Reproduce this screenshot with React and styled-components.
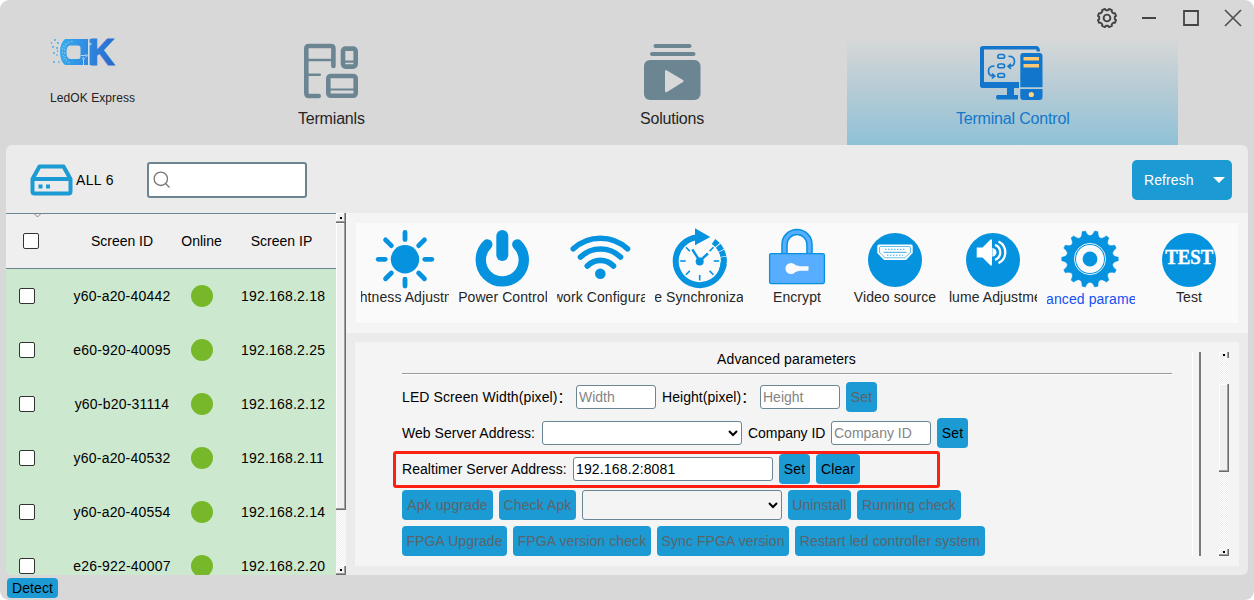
import React from 'react';
import styled, { createGlobalStyle, css } from 'styled-components';

const BLUE = '#1c9ad4';
const ICON = '#0593e0';
const SLATE = '#6b8593';

const Global = createGlobalStyle`
  * { box-sizing: border-box; }
  body { margin: 0; background: #fff; }
  body, input, select, button { font-family: "Liberation Sans", Arial, "Noto Sans CJK SC", sans-serif; font-size: 14px; }
  svg { display: block; flex: none; }
`;

const Window = styled.div`
  width: 1254px;
  height: 600px;
  display: flex;
  flex-direction: column;
  background: #d8d8d8;
  border-radius: 9px;
  overflow: hidden;
  color: #000;
  position: relative;
`;

const Header = styled.header`
  height: 145px;
  display: flex;
  flex: none;
`;

const Brand = styled.div`
  width: 166px;
  padding: 37px 0 0 50px;
  span { display: block; margin-top: 23px; font-size: 12px; line-height: 16px; letter-spacing: 0.08px; color: #222; white-space: nowrap; }
`;

const Nav = styled.nav`
  display: flex;
  gap: 10px;
  padding-top: 37px;
`;

const NavItem = styled.div`
  width: 330.7px;
  height: 108px;
  display: flex;
  flex-direction: column;
  align-items: center;
  justify-content: space-between;
  padding: 6px 0 16px;
  font-size: 16px;
  line-height: 20px;
  letter-spacing: -0.18px;
  color: #262626;
  ${p => p.$active && css`
    color: #1277cc;
    background: linear-gradient(#d8d8d8, #b5cbd5 50%, #8fc1d7);
  `}
`;

const WindowControls = styled.div`
  position: absolute;
  top: 6px;
  right: 9px;
  display: flex;
  gap: 18px;
`;

const Body = styled.main`
  width: 1242px;
  height: 430px;
  margin: 0 6px;
  background: #ebebeb;
  border-radius: 6px;
  overflow: hidden;
  flex: none;
`;

const Toolbar = styled.div`
  height: 68px;
  padding: 15px 16px 0 24px;
  display: flex;
`;

const Count = styled.div`
  width: 117px;
  height: 40px;
  display: flex;
  align-items: center;
  gap: 2px;
  letter-spacing: 0.35px;
`;

const Search = styled.div`
  width: 160px;
  height: 36px;
  margin: 2px 0;
  border: 2px solid #6b8490;
  border-radius: 3px;
  background: #fff;
  padding: 7px 4px;
`;

const Refresh = styled.button`
  width: 100px;
  height: 40px;
  margin-left: auto;
  padding: 0 7px 0 12px;
  border: 0;
  border-radius: 5px;
  background: ${BLUE};
  color: #fff;
  display: flex;
  justify-content: space-between;
  align-items: center;
  letter-spacing: 0.1px;
`;

const Content = styled.div`
  display: flex;
  height: 362px;
`;

const Table = styled.section`
  width: 330px;
  height: 362px;
  overflow: hidden;
  background: #cce8cf;
  flex: none;
`;

const Row = styled.div`
  height: ${p => (p.$head ? 56 : 54)}px;
  display: grid;
  grid-template-columns: 76px 80px 79px 95px;
  align-items: center;
  text-align: center;
  letter-spacing: ${p => (p.$head ? 0 : 0.2)}px;
  ${p => p.$head && css`
    background: #efefef;
    border-top: 1px solid ${SLATE};
    border-bottom: 1px solid ${SLATE};
  `}
  > input { margin-left: ${p => (p.$head ? 17 : 13)}px; }
`;

const IdCell = styled.span`white-space: nowrap; display: flex; justify-content: center;`;
const IpCell = styled.span`padding-right: 14px;`;

const SortMark = styled.svg`
  position: absolute;
  left: 33px;
  top: 213px;
`;

const Check = styled.input.attrs({ type: 'checkbox' })`
  appearance: none;
  width: 16px;
  height: 16px;
  margin: 0;
  background: #fff;
  border: 1px solid #333;
  border-radius: 2px;
`;

const Dot = styled.i`
  width: 22px;
  height: 22px;
  border-radius: 50%;
  background: #76b82a;
  justify-self: center;
`;

const ScrollTrack = styled.div`
  width: 10px;
  height: ${p => p.$h}px;
  flex: none;
  display: flex;
  flex-direction: column;
  background: repeating-conic-gradient(#fff 0 25%, #ececec 0 50%) 0 0 / 2px 2px;
`;

const ScrollPart = styled.div`
  height: ${p => p.$h}px;
  margin-top: ${p => p.$mt || 0}px;
  flex: none;
  background: #f0f0f0;
  border: solid #6b6b6b;
  border-width: 0 1px 1px 0;
  box-shadow: inset -1px -1px #a0a0a0, inset 1px 1px #fff;
  display: flex;
  align-items: center;
  justify-content: center;
  ${p => p.$open && css`
    border-bottom: 0;
    box-shadow: inset -1px 0 #a0a0a0, inset 1px 1px #fff;
  `}
  &::after {
    content: '';
    display: ${p => (p.$arrow ? 'block' : 'none')};
    width: 2px;
    height: 2px;
    background: #000;
  }
`;

const Right = styled.div`
  width: 902px;
  display: flex;
  flex-direction: column;
`;

const TabsWrap = styled.div`
  height: 120px;
  padding: 10px;
  background: #f4f4f4;
`;

const Tabs = styled.div`
  height: 100px;
  background: #fafafa;
  display: flex;
`;

const Tab = styled.div`
  width: 98px;
  padding: 6px 5px 0;
  display: flex;
  flex-direction: column;
  align-items: center;
`;

const TabLabel = styled.div`
  width: 88px;
  height: 20px;
  margin-top: ${p => (p.$active ? 0 : -2)}px;
  display: flex;
  justify-content: center;
  overflow: hidden;
  white-space: nowrap;
  line-height: 20px;
  letter-spacing: 0.08px;
  color: ${p => (p.$active ? '#1450f5' : '#262626')};
  span { flex: none; }
`;

const Panel = styled.section`
  width: 884px;
  height: 224px;
  margin: 9px 0 0 9px;
  padding: 10px 10px 0 47px;
  background: #f4f4f4;
  display: flex;
`;

const Form = styled.div`
  width: 770px;
  display: flex;
  flex-direction: column;
  position: relative;
`;

const Title = styled.div`
  height: 22px;
  margin-bottom: 8px;
  line-height: 14px;
  padding-right: 1px;
  text-align: center;
  letter-spacing: 0.1px;
  border-bottom: 1px solid #9a9a9a;
  box-shadow: 0 1px #fff;
  flex: none;
`;

const FormRow = styled.div`
  height: 30px;
  margin-bottom: 6px;
  display: flex;
  align-items: center;
  gap: 6px;
`;

const Label = styled.label`
  width: ${p => p.$w}px;
  height: 16px;
  line-height: 16px;
  white-space: nowrap;
  letter-spacing: ${p => p.$ls ?? 0.05}px;
`;

const Field = styled.input`
  width: ${p => p.$w}px;
  height: 24px;
  padding: 0 2px;
  border: 1px solid ${SLATE};
  border-radius: 3px;
  background: #fff;
  letter-spacing: 0.15px;
  &::placeholder { color: #858585; letter-spacing: 0; }
`;

const Select = styled.select`
  width: 200px;
  height: ${p => p.$h}px;
  border: 1px solid ${SLATE};
  border-radius: 3px;
  background: ${p => p.$bg};
`;

const Button = styled.button`
  width: ${p => p.$w}px;
  height: ${p => p.$h || 30}px;
  padding: 0;
  border: 0;
  border-radius: 4px;
  background: ${BLUE};
  color: ${p => (p.$off ? '#5d6468' : '#000')};
  white-space: nowrap;
  letter-spacing: 0.1px;
`;

const Highlight = styled.div`
  position: absolute;
  left: -9px;
  top: 99px;
  width: 547px;
  height: 37px;
  border: 3px solid #fd1f12;
  border-radius: 3px;
  pointer-events: none;
`;

const Divider = styled.div`
  width: 9px;
  height: 204px;
  margin: 0 18px 0 20px;
  border-left: 1px solid #fff;
  border-right: 2px solid #7a7a7a;
`;

const Footer = styled.footer`
  padding: 3px 7px;
  display: flex;
`;

const Logo = () => (
  <svg width="66" height="30" viewBox="0 0 66 30" overflow="visible">
    <defs>
      <linearGradient id="logo" x1="0" x2="66" y1="0" y2="8" gradientUnits="userSpaceOnUse">
        <stop offset=".15" stopColor="#35adf2" />
        <stop offset="1" stopColor="#2a68cd" />
      </linearGradient>
    </defs>
    <path fill="url(#logo)" fillRule="evenodd" d="M15 2H38V28H15Q10 24 10 15Q10 6 15 2ZM20 8.500Q16.500 9 16.500 15T20 22H28Q30.500 22 30.500 19.500V11Q30.500 8.500 28 8.500Z" />
    <path fill="url(#logo)" d="M39.500 2h3v26h-3z" />
    <text x="39" y="27.700" fontFamily="Liberation Sans" fontWeight="700" fontSize="36.500" textLength="25.500" lengthAdjust="spacingAndGlyphs" fill="url(#logo)" stroke="url(#logo)" strokeWidth="1.200">K</text>
    <g fill="none" stroke="#d3e4f2" strokeWidth=".8">
      <path d="M31 18.500h4.500M33.500 28V22.500M38.700 7v21" /><circle cx="36.500" cy="18.500" r=".9" /><circle cx="33.500" cy="21.500" r=".9" /><circle cx="40.300" cy="7" r=".9" />
    </g>
    <path stroke="#d8d8d8" strokeWidth="1" strokeLinecap="round" strokeDasharray=".2 3" fill="none" d="M22 4.500Q12 6 12.500 15T20 26M17 7Q14 10 14.500 16T18 24" />
    <g fill="#3aa5e8">
      <circle cx="5" cy="3" r=".9" /><circle cx="1.500" cy="6" r=".8" /><circle cx="8" cy="6" r=".9" /><circle cx="3" cy="10" r=".9" />
      <circle cx="7" cy="11" r=".9" /><circle cx="4" cy="16" r=".9" /><circle cx="7" cy="18" r=".8" />
      <circle cx="4" cy="25" r=".9" /><circle cx="9" cy="25" r=".8" /><circle cx="7.500" cy="14" r=".8" />
    </g>
  </svg>
);

const TerminalsIcon = () => (
  <svg width="54" height="57" viewBox="0 0 54 57" fill="none" stroke={SLATE} strokeWidth="4.600" strokeLinecap="round">
    <path d="M29.400 23V5.500Q29.400 3 27 3H5Q2.300 3 2.300 5.700V50Q2.300 53 5 53H14.700" />
    <path d="M2.300 17h27M2.300 31.700h13.500" strokeWidth="2.400" />
    <rect x="39" y="5.600" width="12.700" height="18" rx="2.500" />
    <path d="M41 18.700h9M25 46.500h26" strokeWidth="2.200" />
    <rect x="24.300" y="33" width="27.400" height="19.800" rx="2.500" />
  </svg>
);

const SolutionsIcon = () => (
  <svg width="57" height="57" viewBox="0 0 57 57">
    <g fill={SLATE}>
      <rect x="9.500" y="1" width="38" height="4" rx="2" />
      <rect x="6" y="9" width="45.500" height="4" rx="2" />
      <rect x="0" y="17" width="56.500" height="40" rx="6" />
    </g>
    <path fill="#d8d8d8" d="M21 28.500Q21 26 23 27.500L39 37Q40.500 38 39 39L23 49Q21 50 21 48Z" />
  </svg>
);

const ControlIcon = () => (
  <svg width="65" height="57" viewBox="1 0 65 57">
    <g fill="#1277cc">
      <path fillRule="evenodd" d="M4 3H57Q61 3 61 8.500H57.500V6.500H5V39H40V45H4Q.5 45 .5 41V7Q.5 3 4 3Z" />
      <path d="M28 45h7v7h4v4.500H18q-2-2.500 0-4.500H28z" />
      <path d="M44 10h16.500q3 0 3 3v31.300H41.300V13q0-3 2.700-3zM41.300 46h22.200v8q0 3-3 3H44.300q-3 0-3-3z" />
    </g>
    <path fill="#fbc971" d="M44.500 14h15.500v3.400H44.500zM44.500 21h15.500v3.400H44.500z" />
    <circle cx="52.300" cy="51.500" r="2.600" fill="#fbd38a" />
    <g fill="none" stroke="#1277cc" strokeWidth="1.600">
      <rect x="18.800" y="11.500" width="6.800" height="3.800" rx="1.900" />
      <rect x="18.800" y="21" width="6.800" height="3.800" rx="1.900" />
      <rect x="18.800" y="30.500" width="6.800" height="3.800" rx="1.900" />
      <path d="M29.500 13.200q6 0 6 5t-5 5M32 20.800l-3 2.500 3 2.500M15.500 23q-6 0-6 5t5 5M12.800 30.500l3 2.500-3 2.500" />
    </g>
  </svg>
);

const gearPath = (cx, cy, teeth, outer, inner, topW, botW) => {
  const pts = [];
  for (let i = 0; i < teeth; i += 1) {
    const mid = ((i + 0.5) / teeth) * Math.PI * 2 - Math.PI / 2;
    [[-botW, inner], [-topW, outer], [topW, outer], [botW, inner]].forEach(([d, r]) => {
      const a = mid + (d * Math.PI) / teeth;
      pts.push(`${(cx + r * Math.cos(a)).toFixed(2)} ${(cy + r * Math.sin(a)).toFixed(2)}`);
    });
  }
  return `M${pts.join('L')}Z`;
};

/* Sprocket outline: flat tooth tips joined by concave curves. */
const sprocketPath = (cx, cy, teeth, outer, dip, tip) => {
  const at = (a, r) => `${(cx + r * Math.cos(a)).toFixed(2)} ${(cy + r * Math.sin(a)).toFixed(2)}`;
  const half = Math.PI / teeth;
  let d = '';
  for (let i = 0; i < teeth; i += 1) {
    const mid = (2 * i + 1) * half - Math.PI / 2;
    d += `${i ? 'L' : 'M'}${at(mid - tip * half, outer)}L${at(mid + tip * half, outer)}`;
    d += `C${at(mid + half * 0.62, dip)} ${at(mid + half * 1.38, dip)} ${at(mid + half * (2 - tip), outer)}`;
  }
  return `${d}Z`;
};

const ServerIcon = () => (
  <svg width="44" height="34" viewBox="0.500 0 44 34" fill="none" stroke={BLUE} strokeWidth="4" strokeLinejoin="round">
    <path d="M3 16L10 3.500H34L41 16V28.500Q41 30.500 39 30.500H5Q3 30.500 3 28.500ZM3 16H41" />
    <path fill={BLUE} stroke="none" d="M9 21.500h4v4H9zM16.500 21.500h4v4h-4z" />
  </svg>
);

const SunIcon = () => (
  <>
    <circle cx="30" cy="30.300" r="14.200" fill={ICON} />
    <g stroke={ICON} strokeWidth="4.800" strokeLinecap="round">
      {[0, 45, 90, 135, 180, 225, 270, 315].map(a => (
        <path key={a} d={a % 90 ? 'M30 11V2.800' : 'M30 10.500V3.500'} transform={`rotate(${a} 30 30.300)`} />
      ))}
    </g>
  </>
);

const PowerIcon = () => (
  <g fill="none" stroke={ICON} strokeLinecap="round">
    <path strokeWidth="10.400" d="M14.300 15.500A21.500 21.500 0 1 0 44.300 15.500" />
    <path strokeWidth="12" d="M29.300 7V26" />
  </g>
);

const WifiIcon = () => (
  <g fill="none" stroke={ICON} strokeWidth="5.600" strokeLinecap="round">
    <path d="M2.300 19.800A40 40 0 0 1 56.500 19.800M9.500 28A29 29 0 0 1 49.500 28M16.300 37A18 18 0 0 1 42.500 37" />
    <circle cx="29.300" cy="44.700" r="5.300" fill={ICON} stroke="none" />
  </g>
);

const ClockIcon = () => (
  <g fill="none" stroke={ICON}>
    <path strokeWidth="6" d="M29 8.200A24 24 0 1 0 53.700 39" />
    <path strokeWidth="6" strokeDasharray="5.500 .8" d="M44.500 12.500A24 24 0 0 1 53.900 39" />
    <path strokeWidth="6" d="M54.500 33A24 24 0 0 1 53 41" />
    <path fill={ICON} stroke="none" d="M26 -.7L41.300 8 26 16.300Z" />
    <path strokeWidth="2.400" d="M23.300 20.300L30.700 32 39 24.500" />
    <circle cx="30.700" cy="32.500" r="4" fill={ICON} stroke="none" />
    <g strokeWidth="1.600">
      {[45, 90, 135, 180, 225, 270, 315].map(a => (
        <path key={a} d="M30.700 12.500v5.500" transform={`rotate(${a} 30.700 32)`} />
      ))}
    </g>
  </g>
);

const LockIcon = () => (
  <>
    <path d="M17.500 25V15.500A12.500 12.500 0 0 1 42.500 15.500V25" fill="none" stroke={ICON} strokeWidth="6.600" />
    <path d="M17.500 25V15.500A12.500 12.500 0 0 1 42.500 15.500V25" fill="none" stroke="#57adff" strokeWidth="3.600" />
    <rect x="2.600" y="24.600" width="54.800" height="30" rx="1.500" fill="#57adff" stroke={ICON} strokeWidth="1.300" />
    <circle cx="24" cy="39.500" r="5.500" fill="#fafafa" />
    <path d="M26 35.500L33 37.300H41.500V41.700H33L26 43.500Z" fill="#fafafa" />
  </>
);

const Disc = () => <circle cx="30" cy="31" r="27" fill={ICON} />;

const VideoIcon = () => (
  <>
    <Disc />
    <path d="M14 15.500H46Q47.700 15.500 47.700 17V24L43.500 28.500 41 31H19L16.500 28.500 12.300 24V17Q12.300 15.500 14 15.500Z" fill="#fff" />
    <path d="M15.500 17.500H44.500Q45.500 17.500 45.500 19V23.500L41 27.500 40 28.800H20L19 27.500 14.500 23.500V19Q14.500 17.500 15.500 17.500Z" fill="none" stroke={ICON} strokeWidth=".6" />
    <path d="M18.500 23.300h23" stroke={ICON} strokeWidth=".8" />
    <path d="M20 20.300h20M22 26.200h16" stroke={ICON} strokeWidth=".8" strokeDasharray="1.500 1.500" />
  </>
);

const VolumeIcon = () => (
  <>
    <Disc />
    <path d="M13.700 18.500H19.500L27.500 10.500H29V36.500H27.500L19.500 28.500H13.700Z" fill="#fff" />
    <path d="M30.500 20.500a3 3 0 0 1 0 5.600zM32 15.800a8 8 0 0 1 0 15M35.500 12.500a12 12 0 0 1 0 21.600" fill="none" stroke="#fff" strokeWidth="2.300" />
  </>
);

const GearIcon = () => (
  <>
    <path d={sprocketPath(29, 30, 14, 28.300, 21.800, 0.26)} fill={ICON} stroke={ICON} strokeWidth=".6" strokeLinejoin="round" />
    <circle cx="29" cy="30" r="15.600" fill="none" stroke="#fafafa" strokeWidth=".9" />
    <circle cx="29" cy="30" r="10.700" fill="none" stroke="#fafafa" strokeWidth="6.600" />
  </>
);

const TestIcon = () => (
  <>
    <Disc />
    <text x="6.200" y="35" fill="#fff" stroke="#fff" strokeWidth=".4" fontFamily="Liberation Serif" fontWeight="700" fontSize="20" textLength="48" lengthAdjust="spacingAndGlyphs">TEST</text>
  </>
);

const tabs = [
  { label: 'Brightness Adjustment', icon: SunIcon },
  { label: 'Power Control', icon: PowerIcon },
  { label: 'Network Configuration', icon: WifiIcon },
  { label: 'Time Synchronization', icon: ClockIcon },
  { label: 'Encrypt', icon: LockIcon },
  { label: 'Video source', icon: VideoIcon },
  { label: 'Volume Adjustment', icon: VolumeIcon },
  { label: 'Advanced parameters', icon: GearIcon, active: true },
  { label: 'Test', icon: TestIcon },
];

const screens = [
  ['y60-a20-40442', '192.168.2.18'],
  ['e60-920-40095', '192.168.2.25'],
  ['y60-b20-31114', '192.168.2.12'],
  ['y60-a20-40532', '192.168.2.11'],
  ['y60-a20-40554', '192.168.2.14'],
  ['e26-922-40007', '192.168.2.20'],
];

export default function App() {
  return (
    <Window>
      <Global />
      <Header>
        <Brand><Logo /><span>LedOK Express</span></Brand>
        <Nav>
          <NavItem><TerminalsIcon />Termianls</NavItem>
          <NavItem><SolutionsIcon />Solutions</NavItem>
          <NavItem $active><ControlIcon />Terminal Control</NavItem>
        </Nav>
      </Header>
      <WindowControls>
        <svg width="24" height="24" viewBox="0 0 24 24" fill="none" stroke="#444" strokeWidth="1.900" strokeLinejoin="round">
          <path d={gearPath(12, 12, 8, 9.300, 7.900, 0.42, 0.62)} />
          <circle cx="12" cy="12" r="3.400" />
        </svg>
        <svg width="24" height="24" stroke="#444" strokeWidth="2"><path d="M5 12h14" /></svg>
        <svg width="24" height="24" fill="none" stroke="#444" strokeWidth="1.800"><path d="M5 5h14v14H5z" /></svg>
        <svg width="24" height="24" stroke="#505050" strokeWidth="1.700"><path d="M4 4l16 16M20 4L4 20" /></svg>
      </WindowControls>
      <Body>
        <Toolbar>
          <Count><ServerIcon />ALL 6</Count>
          <Search>
            <svg width="18" height="18" fill="none" stroke="#777" strokeWidth="1.300"><circle cx="7.800" cy="7.800" r="6.700" /><path d="M12.500 12.500L16.500 16.500" /></svg>
          </Search>
          <Refresh>Refresh<svg width="12" height="6"><path d="M0 0h12L6 6z" fill="#fff" /></svg></Refresh>
        </Toolbar>
        <Content>
          <Table>
            <Row $head>
              <Check /><IdCell>Screen ID</IdCell><span>Online</span><IpCell>Screen IP</IpCell>
            </Row>
            {screens.map(([id, ip]) => (
              <Row key={id}><Check /><IdCell>{id}</IdCell><Dot /><IpCell>{ip}</IpCell></Row>
            ))}
          </Table>
          <ScrollTrack $h={362}>
            <ScrollPart $h={10} $arrow />
            <ScrollPart $h={287} />
            <ScrollPart $h={9} $mt={56} $arrow />
          </ScrollTrack>
          <Right>
            <TabsWrap>
              <Tabs>
                {tabs.map(({ label, icon: Icon, active }) => (
                  <Tab key={label}>
                    <svg width="60" height="60" viewBox="0 0 60 60" overflow="visible"><Icon /></svg>
                    <TabLabel $active={active}><span>{label}</span></TabLabel>
                  </Tab>
                ))}
              </Tabs>
            </TabsWrap>
            <Panel>
              <Form>
                <Title>Advanced parameters</Title>
                <FormRow>
                  <Label $w={168} $ls={0.1}>LED Screen Width(pixel)：</Label><Field $w={80} placeholder="Width" />
                  <Label $w={92}>Height(pixel)：</Label><Field $w={80} placeholder="Height" />
                  <Button $w={31} $off>Set</Button>
                </FormRow>
                <FormRow>
                  <Label $w={134}>Web Server Address:</Label><Select $h={24} $bg="#fff" />
                  <Label $w={77} $ls={-0.05}>Company ID</Label><Field $w={100} placeholder="Company ID" />
                  <Button $w={31}>Set</Button>
                </FormRow>
                <FormRow>
                  <Label $w={165}>Realtimer Server Address:</Label><Field $w={200} defaultValue="192.168.2:8081" />
                  <Button $w={31}>Set</Button><Button $w={44}>Clear</Button>
                </FormRow>
                <FormRow>
                  <Button $w={91} $off>Apk upgrade</Button><Button $w={77} $off>Check Apk</Button>
                  <Select $h={30} $bg="#f4f4f4" />
                  <Button $w={63} $off>Uninstall</Button><Button $w={104} $off>Running check</Button>
                </FormRow>
                <FormRow>
                  <Button $w={105} $off>FPGA Upgrade</Button><Button $w={138} $off>FPGA version check</Button>
                  <Button $w={132} $off>Sync FPGA version</Button><Button $w={190} $off>Restart led controller system</Button>
                </FormRow>
                <Highlight />
              </Form>
              <Divider />
              <ScrollTrack $h={204}>
                <ScrollPart $h={6} $arrow $open />
                <ScrollPart $h={88} $mt={26} />
                <ScrollPart $h={7} $mt={77} $arrow />
              </ScrollTrack>
            </Panel>
          </Right>
        </Content>
      </Body>
      <SortMark width="9" height="5" fill="none" stroke="#888"><path d="M1 .5L4.500 4 8 .5" /></SortMark>
      <Footer><Button $w={51} $h={20}>Detect</Button></Footer>
    </Window>
  );
}
